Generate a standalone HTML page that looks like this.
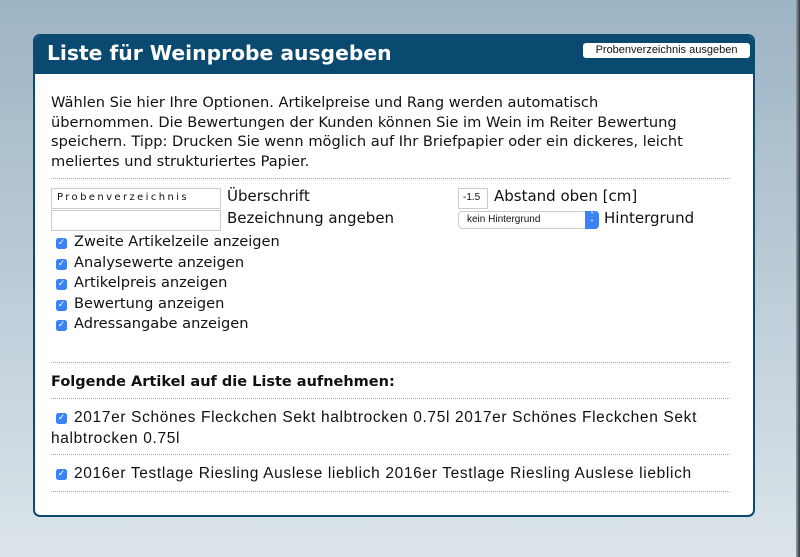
<!DOCTYPE html>
<html><head><meta charset="utf-8"><style>
*{margin:0;padding:0;box-sizing:border-box}
body{width:800px;height:557px;overflow:hidden;background:linear-gradient(#9db4c4,#dbe4ea);font-family:"DejaVu Sans",Verdana,sans-serif;color:#111;position:relative}
.edge{position:absolute;right:0;top:0;width:4px;height:557px;background:linear-gradient(90deg,#8fa2b0,#333)}
.panel{position:absolute;left:33px;top:34px;width:722px;height:483px;background:#fff;border:2px solid #0e4a6e;border-radius:7px;overflow:hidden}
.hdr{position:absolute;left:0;top:0;width:100%;height:38px;background:#0b4a70}
.hdr h1{position:absolute;left:12px;top:5px;color:#fff;font:bold 20.3px "DejaVu Sans",Verdana,sans-serif}
.btn{position:absolute;left:548px;top:7px;width:167px;height:15px;background:#fff;border-radius:3px;font:11px "Liberation Sans",Arial,sans-serif;text-align:center;line-height:15px;color:#111}
.a{position:absolute;white-space:nowrap}
.t{font-size:14.6px;line-height:19.5px}
.dot{position:absolute;left:16px;width:679px;border-top:1px dotted #aaa;height:0}
.inp{position:absolute;border:1px solid #ccc;background:#fff;height:21px}
.cb{position:absolute;left:21px;width:11px;height:11px;background:#3b82f6;border-radius:2.5px;color:#fff;font-size:9px;line-height:11px;text-align:center}
.it{font-family:"Liberation Sans",Arial,sans-serif;font-size:15.5px;letter-spacing:0.65px}
</style></head><body>
<div class="edge"></div>
<div class="panel">
<div class="hdr"><h1>Liste für Weinprobe ausgeben</h1><div class="btn">Probenverzeichnis ausgeben</div></div>
<div class="a t" style="left:16px;top:57px">Wählen Sie hier Ihre Optionen. Artikelpreise und Rang werden automatisch<br>übernommen. Die Bewertungen der Kunden können Sie im Wein im Reiter Bewertung<br>speichern. Tipp: Drucken Sie wenn möglich auf Ihr Briefpapier oder ein dickeres, leicht<br>meliertes und strukturiertes Papier.</div>
<div class="dot" style="top:142px"></div>
<div class="inp" style="left:16px;top:152px;width:170px"><span style="position:absolute;left:5px;top:3px;font:10px 'DejaVu Sans',sans-serif;letter-spacing:2.4px">Probenverzeichnis</span></div>
<div class="a t" style="left:192px;top:151px;font-size:15px">Überschrift</div>
<div class="inp" style="left:16px;top:174px;width:170px"></div>
<div class="a t" style="left:192px;top:173px;font-size:15px">Bezeichnung angeben</div>
<div class="inp" style="left:423px;top:152px;width:30px"><span style="position:absolute;left:4px;top:3px;font:10px 'Liberation Sans',sans-serif">-1.5</span></div>
<div class="a t" style="left:459px;top:151px;font-size:15px">Abstand oben [cm]</div>
<div class="inp" style="left:423px;top:175px;width:141px;height:18px;border-radius:4px"><span style="position:absolute;left:8px;top:2px;font:10px 'Liberation Sans',sans-serif">kein Hintergrund</span><span style="position:absolute;right:-1px;top:-1px;width:14px;height:18px;background:#3b82f6;border-radius:0 4px 4px 0;color:#fff;font-size:8px;line-height:8px;text-align:center;padding-top:1px">˄<br>˅</span></div>
<div class="a t" style="left:569px;top:173px;font-size:15px">Hintergrund</div>
<div class="cb" style="top:202px">✓</div><div class="a t" style="left:39px;top:196px">Zweite Artikelzeile anzeigen</div>
<div class="cb" style="top:223px">✓</div><div class="a t" style="left:39px;top:217px">Analysewerte anzeigen</div>
<div class="cb" style="top:243px">✓</div><div class="a t" style="left:39px;top:237px">Artikelpreis anzeigen</div>
<div class="cb" style="top:264px">✓</div><div class="a t" style="left:39px;top:258px">Bewertung anzeigen</div>
<div class="cb" style="top:284px">✓</div><div class="a t" style="left:39px;top:278px">Adressangabe anzeigen</div>
<div class="dot" style="top:326px"></div>
<div class="a t" style="left:16px;top:337px;font-weight:bold;font-size:14.5px">Folgende Artikel auf die Liste aufnehmen:</div>
<div class="dot" style="top:362px"></div>
<div class="cb" style="top:377px">✓</div>
<div class="a it" style="left:39px;top:371px;line-height:21px">2017er Schönes Fleckchen Sekt halbtrocken 0.75l 2017er Schönes Fleckchen Sekt</div>
<div class="a it" style="left:16px;top:392px;line-height:21px">halbtrocken 0.75l</div>
<div class="dot" style="top:418px"></div>
<div class="cb" style="top:433px">✓</div>
<div class="a it" style="left:39px;top:427px;line-height:21px">2016er Testlage Riesling Auslese lieblich 2016er Testlage Riesling Auslese lieblich</div>
<div class="dot" style="top:455px"></div>
</div>
</body></html>
